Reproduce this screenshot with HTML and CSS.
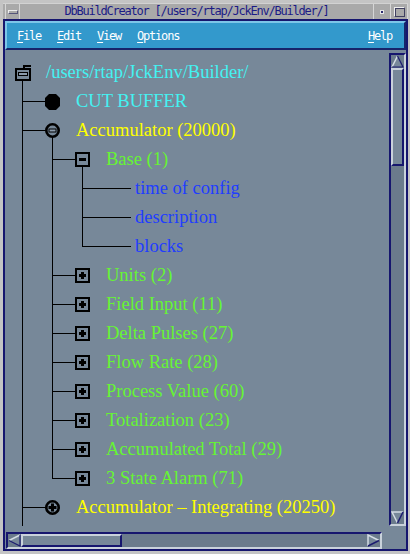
FILE: index.html
```html
<!DOCTYPE html>
<html>
<head>
<meta charset="utf-8">
<link rel="stylesheet" href="styles.css">
</head>
<body>
<div class="window">
  <div class="titlebar">
    <div class="tb-menu"><span class="tb-bar"></span></div>
    <div class="tb-title mono">DbBuildCreator [/users/rtap/JckEnv/Builder/]</div>
    <div class="tb-min"><span class="tb-dot"></span></div>
    <div class="tb-max"><span class="tb-sq"></span></div>
  </div>
  <div class="client">
    <div class="menubar mono">
      <span class="mi"><u>F</u>ile</span>
      <span class="mi"><u>E</u>dit</span>
      <span class="mi"><u>V</u>iew</span>
      <span class="mi"><u>O</u>ptions</span>
      <span class="spacer"></span>
      <span class="mi help"><u>H</u>elp</span>
    </div>
    <div class="work">
      <div class="viewport">
        <div class="tree">
          <div class="row">
            <span class="c ic ic-v"><svg width="16" height="16" viewBox="0 0 16 16"><rect x="8" y="0" width="8" height="2" fill="#000"/><rect x="8" y="0" width="2" height="4" fill="#000"/><rect x="0" y="3" width="16" height="13" fill="#000"/><rect x="2" y="5" width="12" height="9" fill="#778899"/><rect x="3" y="7" width="10" height="4" fill="#000"/><rect x="4" y="8" width="8" height="2" fill="#8a9aab"/></svg></span>
            <span class="lbl cyan">/users/rtap/JckEnv/Builder/</span>
          </div>
          <div class="row">
            <span class="c t"></span>
            <span class="c ic ic-h"><svg width="15" height="16" viewBox="0 0 15 16"><path d="M4,0 H11 L15,4 V12 L11,16 H4 L0,12 V4 Z" fill="#000"/></svg></span>
            <span class="lbl cyan">CUT BUFFER</span>
          </div>
          <div class="row">
            <span class="c t"></span>
            <span class="c ic ic-hv"><svg width="15" height="15" viewBox="0 0 15 15"><circle cx="7.5" cy="7.5" r="6.2" fill="#778899" stroke="#000" stroke-width="2.6"/><rect x="3.5" y="5.5" width="8" height="4" fill="#000"/><rect x="4.5" y="6.5" width="6" height="2" fill="#8a9aab"/></svg></span>
            <span class="lbl yellow">Accumulator (20000)</span>
          </div>
          <div class="row">
            <span class="c v"></span>
            <span class="c t"></span>
            <span class="c ic ic-hv"><svg width="15" height="15" viewBox="0 0 15 15"><rect width="15" height="15" fill="#000"/><rect x="2" y="2" width="11" height="11" fill="#778899"/><rect x="4" y="6" width="7" height="3" fill="#000"/></svg></span>
            <span class="lbl green">Base (1)</span>
          </div>
          <div class="row">
            <span class="c v"></span>
            <span class="c v"></span>
            <span class="c t"></span>
            <span class="leaf"></span>
            <span class="lbl blue leaf-lbl">time of config</span>
          </div>
          <div class="row">
            <span class="c v"></span>
            <span class="c v"></span>
            <span class="c t"></span>
            <span class="leaf"></span>
            <span class="lbl blue leaf-lbl">description</span>
          </div>
          <div class="row">
            <span class="c v"></span>
            <span class="c v"></span>
            <span class="c l"></span>
            <span class="leaf"></span>
            <span class="lbl blue leaf-lbl">blocks</span>
          </div>
          <div class="row">
            <span class="c v"></span>
            <span class="c t"></span>
            <span class="c ic ic-h"><svg width="15" height="15" viewBox="0 0 15 15"><rect width="15" height="15" fill="#000"/><rect x="2" y="2" width="11" height="11" fill="#778899"/><rect x="4" y="6" width="7" height="3" fill="#000"/><rect x="6" y="4" width="3" height="7" fill="#000"/></svg></span>
            <span class="lbl green">Units (2)</span>
          </div>
          <div class="row">
            <span class="c v"></span>
            <span class="c t"></span>
            <span class="c ic ic-h"><svg width="15" height="15" viewBox="0 0 15 15"><rect width="15" height="15" fill="#000"/><rect x="2" y="2" width="11" height="11" fill="#778899"/><rect x="4" y="6" width="7" height="3" fill="#000"/><rect x="6" y="4" width="3" height="7" fill="#000"/></svg></span>
            <span class="lbl green">Field Input (11)</span>
          </div>
          <div class="row">
            <span class="c v"></span>
            <span class="c t"></span>
            <span class="c ic ic-h"><svg width="15" height="15" viewBox="0 0 15 15"><rect width="15" height="15" fill="#000"/><rect x="2" y="2" width="11" height="11" fill="#778899"/><rect x="4" y="6" width="7" height="3" fill="#000"/><rect x="6" y="4" width="3" height="7" fill="#000"/></svg></span>
            <span class="lbl green">Delta Pulses (27)</span>
          </div>
          <div class="row">
            <span class="c v"></span>
            <span class="c t"></span>
            <span class="c ic ic-h"><svg width="15" height="15" viewBox="0 0 15 15"><rect width="15" height="15" fill="#000"/><rect x="2" y="2" width="11" height="11" fill="#778899"/><rect x="4" y="6" width="7" height="3" fill="#000"/><rect x="6" y="4" width="3" height="7" fill="#000"/></svg></span>
            <span class="lbl green">Flow Rate (28)</span>
          </div>
          <div class="row">
            <span class="c v"></span>
            <span class="c t"></span>
            <span class="c ic ic-h"><svg width="15" height="15" viewBox="0 0 15 15"><rect width="15" height="15" fill="#000"/><rect x="2" y="2" width="11" height="11" fill="#778899"/><rect x="4" y="6" width="7" height="3" fill="#000"/><rect x="6" y="4" width="3" height="7" fill="#000"/></svg></span>
            <span class="lbl green">Process Value (60)</span>
          </div>
          <div class="row">
            <span class="c v"></span>
            <span class="c t"></span>
            <span class="c ic ic-h"><svg width="15" height="15" viewBox="0 0 15 15"><rect width="15" height="15" fill="#000"/><rect x="2" y="2" width="11" height="11" fill="#778899"/><rect x="4" y="6" width="7" height="3" fill="#000"/><rect x="6" y="4" width="3" height="7" fill="#000"/></svg></span>
            <span class="lbl green">Totalization (23)</span>
          </div>
          <div class="row">
            <span class="c v"></span>
            <span class="c t"></span>
            <span class="c ic ic-h"><svg width="15" height="15" viewBox="0 0 15 15"><rect width="15" height="15" fill="#000"/><rect x="2" y="2" width="11" height="11" fill="#778899"/><rect x="4" y="6" width="7" height="3" fill="#000"/><rect x="6" y="4" width="3" height="7" fill="#000"/></svg></span>
            <span class="lbl green">Accumulated Total (29)</span>
          </div>
          <div class="row">
            <span class="c v"></span>
            <span class="c l"></span>
            <span class="c ic ic-h"><svg width="15" height="15" viewBox="0 0 15 15"><rect width="15" height="15" fill="#000"/><rect x="2" y="2" width="11" height="11" fill="#778899"/><rect x="4" y="6" width="7" height="3" fill="#000"/><rect x="6" y="4" width="3" height="7" fill="#000"/></svg></span>
            <span class="lbl green">3 State Alarm (71)</span>
          </div>
          <div class="row">
            <span class="c t"></span>
            <span class="c ic ic-h"><svg width="15" height="15" viewBox="0 0 15 15"><circle cx="7.5" cy="7.5" r="6.2" fill="#778899" stroke="#000" stroke-width="2.6"/><rect x="3.5" y="6" width="8" height="3" fill="#000"/><rect x="6" y="3.5" width="3" height="8" fill="#000"/></svg></span>
            <span class="lbl yellow">Accumulator – Integrating (20250)</span>
          </div>
          <div class="row">
            <span class="c v"></span>
          </div>
        </div>
      </div>
      <div class="vscroll">
        <span class="arrow"><svg width="13" height="13" viewBox="0 0 13 13"><polygon points="6.5,1 12,12 1,12" fill="#778899"/><polyline points="1,12 6.5,1" fill="none" stroke="#d4dce4" stroke-width="1.5"/><polyline points="6.5,1 12,12 1,12" fill="none" stroke="#1c1c70" stroke-width="1.2"/></svg></span>
        <span class="vthumb"></span>
        <span class="vrest"></span>
        <span class="arrow"><svg width="13" height="13" viewBox="0 0 13 13"><polygon points="1,1 12,1 6.5,12" fill="#778899"/><polyline points="6.5,12 1,1 12,1" fill="none" stroke="#d4dce4" stroke-width="1.5"/><polyline points="12,1 6.5,12" fill="none" stroke="#1c1c70" stroke-width="1.5"/></svg></span>
      </div>
      <div class="hscroll">
        <span class="arrow"><svg width="13" height="13" viewBox="0 0 13 13"><polygon points="1,6.5 12,1 12,12" fill="#778899"/><polyline points="1,6.5 12,1" fill="none" stroke="#d4dce4" stroke-width="1.5"/><polyline points="12,1 12,12 1,6.5" fill="none" stroke="#1c1c70" stroke-width="1.2"/></svg></span>
        <span class="hthumb"></span>
        <span class="hrest"></span>
        <span class="arrow"><svg width="13" height="13" viewBox="0 0 13 13"><polygon points="1,1 12,6.5 1,12" fill="#778899"/><polyline points="1,12 1,1 12,6.5" fill="none" stroke="#d4dce4" stroke-width="1.5"/><polyline points="12,6.5 1,12" fill="none" stroke="#1c1c70" stroke-width="1.5"/></svg></span>
      </div>
      <div class="corner"></div>
    </div>
  </div>
</div>
</body>
</html>
```
FILE: styles.css
```css
html, body {
  margin: 0;
  padding: 0;
  background: #c4c4c4;
}

.mono {
  font-family: "DejaVu Sans Mono", "Liberation Mono", monospace;
  font-size: 12px;
  letter-spacing: -1.22px;
}

.window {
  width: 410px;
  height: 554px;
  box-sizing: border-box;
  padding: 3px 2px 3px 3px;
  background: #c4c4c4;
  display: flex;
  flex-direction: column;
  overflow: hidden;
}

/* ---------- title bar ---------- */
.titlebar {
  height: 16px;
  flex: none;
  display: flex;
  background: #a9a9a9;
  box-sizing: border-box;
  border-top: 1px solid #d2d2d2;
}

.tb-menu {
  width: 15px;
  margin-left: 2px;
  box-sizing: border-box;
  border-left: 1px solid #d6d6d6;
  border-right: 1px solid #d6d6d6;
  display: flex;
  align-items: center;
  justify-content: center;
}

.tb-bar {
  width: 8px;
  height: 2px;
  background: #a9a9a9;
  border-top: 1px solid #eeeeee;
  border-bottom: 1px solid #55557a;
  border-left: 1px solid #eeeeee;
  border-right: 1px solid #55557a;
}

.tb-title {
  flex: 1;
  text-align: center;
  color: #1b1b86;
  line-height: 15px;
  border-right: 1px solid #d6d6d6;
  white-space: nowrap;
}

.tb-min, .tb-max {
  width: 17px;
  box-sizing: border-box;
  display: flex;
  align-items: center;
  justify-content: center;
  border-right: 1px solid #d6d6d6;
}

.tb-dot {
  width: 2px;
  height: 2px;
  background: #2a2a70;
  border: 1px solid #e8e8e8;
}

.tb-sq {
  width: 9px;
  height: 8px;
  border: 1px solid #eeeeee;
  border-right-color: #404060;
  border-bottom-color: #404060;
  box-shadow: inset 1px 1px 0 #404060;
}

/* ---------- client ---------- */
.client {
  flex: 1;
  display: flex;
  flex-direction: column;
  border: 2px solid #16166e;
  min-height: 0;
}

.menubar {
  height: 29px;
  flex: none;
  box-sizing: border-box;
  display: flex;
  align-items: center;
  background: #3399cc;
  color: #ffffff;
  border-top: 2px solid #7cc6e8;
  border-left: 2px solid #7cc6e8;
  border-bottom: 2px solid #17246a;
  border-right: 2px solid #17246a;
  padding-left: 2px;
  padding-right: 4px;
  padding-top: 1px;
}

.mi {
  padding: 0 8px;
  white-space: nowrap;
}

.mi u {
  text-decoration: underline;
  text-underline-offset: 2px;
}

.spacer {
  flex: 1;
}

/* ---------- work area ---------- */
.work {
  flex: 1;
  min-height: 0;
  display: grid;
  grid-template-columns: 1fr 17px;
  grid-template-rows: 1fr 17px;
  column-gap: 7px;
  row-gap: 6px;
  padding: 3px 0 0 1px;
  background: #778899;
}

.viewport {
  overflow: hidden;
  min-height: 0;
  margin-top: -3px;
  margin-left: -1px;
}

.tree {
  padding: 8px 0 0 2px;
  font-family: "Liberation Serif", "Times New Roman", serif;
  font-size: 18.5px;
}

.row {
  display: flex;
  align-items: center;
  height: 29px;
  white-space: nowrap;
}

.c {
  width: 30px;
  height: 29px;
  flex: none;
  background-repeat: no-repeat;
  box-sizing: border-box;
}

.v {
  background-image: linear-gradient(#000, #000);
  background-size: 1px 29px;
  background-position: 15px 0;
}

.t {
  background-image: linear-gradient(#000, #000), linear-gradient(#000, #000);
  background-size: 1px 29px, 15px 1px;
  background-position: 15px 0, 15px 14px;
}

.l {
  background-image: linear-gradient(#000, #000), linear-gradient(#000, #000);
  background-size: 1px 15px, 15px 1px;
  background-position: 15px 0, 15px 14px;
}

.ic {
  display: flex;
  align-items: center;
  padding-left: 8px;
}

.ic svg {
  display: block;
}

.ic-h {
  background-image: linear-gradient(#000, #000);
  background-size: 15px 1px;
  background-position: 0 14px;
}

.ic-v {
  background-image: linear-gradient(#000, #000);
  background-size: 1px 15px;
  background-position: 15px 14px;
}

.ic-hv {
  background-image: linear-gradient(#000, #000), linear-gradient(#000, #000);
  background-size: 15px 1px, 1px 15px;
  background-position: 0 14px, 15px 14px;
  background-repeat: no-repeat;
}

.leaf {
  width: 34px;
  height: 29px;
  flex: none;
  background-image: linear-gradient(#000, #000);
  background-size: 34px 1px;
  background-position: 0 14px;
  background-repeat: no-repeat;
}

.lbl {
  margin-left: 9px;
  line-height: 29px;
}

.leaf-lbl {
  margin-left: 4px;
}

.cyan { color: #44f2f2; }
.yellow { color: #ffff00; }
.green { color: #66f533; }
.blue { color: #1f3dff; }

/* ---------- scrollbars ---------- */
.vscroll, .hscroll {
  box-sizing: border-box;
  background: #6b7b8c;
  border: 2px solid #16166e;
  border-right-color: #c9d2db;
  border-bottom-color: #c9d2db;
  display: flex;
}

.vscroll {
  flex-direction: column;
}

.hscroll {
  flex-direction: row;
}

.arrow {
  width: 13px;
  height: 13px;
  flex: none;
}

.arrow svg {
  display: block;
}

.vthumb, .hthumb {
  flex: none;
  box-sizing: border-box;
  background: #778899;
  border: 2px solid #c9d2db;
  border-right-color: #16166e;
  border-bottom-color: #16166e;
}

.vthumb {
  height: 98px;
  width: 13px;
}

.hthumb {
  width: 101px;
  height: 13px;
}

.vrest, .hrest {
  flex: 1;
}
```
